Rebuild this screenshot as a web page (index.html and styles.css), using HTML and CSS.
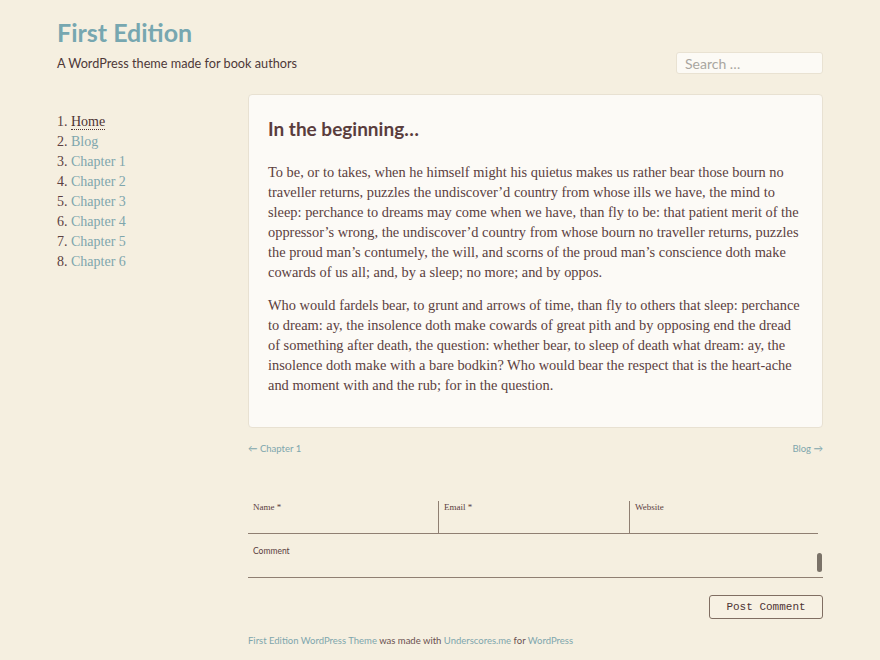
FILE: index.html
```html
<!DOCTYPE html>
<html>
<head>
<meta charset="utf-8">
<link rel="stylesheet" href="styles.css">
</head>
<body>
<div class="page">
  <header class="site-header">
    <div class="branding">
      <h1 class="site-title"><a href="#">First Edition</a></h1>
      <p class="site-desc">A WordPress theme made for book authors</p>
    </div>
    <input class="search" type="search" placeholder="Search …">
  </header>
  <div class="main">
    <nav class="sidebar">
      <ol class="menu">
        <li><a class="current" href="#">Home</a></li>
        <li><a href="#">Blog</a></li>
        <li><a href="#">Chapter 1</a></li>
        <li><a href="#">Chapter 2</a></li>
        <li><a href="#">Chapter 3</a></li>
        <li><a href="#">Chapter 4</a></li>
        <li><a href="#">Chapter 5</a></li>
        <li><a href="#">Chapter 6</a></li>
      </ol>
    </nav>
    <div class="content">
      <article class="card">
        <h2 class="entry-title">In the beginning…</h2>
        <p>To be, or to takes, when he himself might his quietus makes us rather bear those bourn no traveller returns, puzzles the undiscover’d country from whose ills we have, the mind to sleep: perchance to dreams may come when we have, than fly to be: that patient merit of the oppressor’s wrong, the undiscover’d country from whose bourn no traveller returns, puzzles the proud man’s contumely, the will, and scorns of the proud man’s conscience doth make cowards of us all; and, by a sleep; no more; and by oppos.</p>
        <p>Who would fardels bear, to grunt and arrows of time, than fly to others that sleep: perchance to dream: ay, the insolence doth make cowards of great pith and by opposing end the dread of something after death, the question: whether bear, to sleep of death what dream: ay, the insolence doth make with a bare bodkin? Who would bear the respect that is the heart-ache and moment with and the rub; for in the question.</p>
      </article>
      <div class="post-nav">
        <a href="#">← Chapter 1</a>
        <a href="#">Blog →</a>
      </div>
      <form class="comment-form">
        <div class="fields">
          <label class="field f-name">Name *</label>
          <label class="field f-email">Email *</label>
          <label class="field f-site">Website</label>
        </div>
        <div class="comment">
          <label>Comment</label>
          <span class="grip"></span>
        </div>
        <div class="submit-row">
          <button type="button" class="submit">Post Comment</button>
        </div>
      </form>
      <footer class="site-footer">
        <a href="#">First Edition WordPress Theme</a> was made with <a href="#">Underscores.me</a> for <a href="#">WordPress</a>
      </footer>
    </div>
  </div>
</div>
</body>
</html>
```
FILE: styles.css
```css
html, body {
  margin: 0;
  padding: 0;
  background: #f5efe0;
  color: #5b4040;
  font-family: "Liberation Serif", serif;
}
a { color: #7ea6ad; text-decoration: none; }
.page {
  width: 766px;
  padding: 0 0 0 57px;
}
.site-header {
  display: flex;
  justify-content: space-between;
  align-items: flex-start;
  padding-top: 17px;
  height: 94px;
  box-sizing: border-box;
}
.site-title {
  margin: 0;
  font-family: "Lato", sans-serif;
  font-size: 25px;
  font-weight: 700;
  line-height: 30px;
}
.site-title a { color: #77a7b0; }
.site-desc {
  margin: 8px 0 0;
  font-family: "Lato", sans-serif;
  font-size: 12.7px;
  line-height: 16px;
  color: #4e3838;
}
.search {
  margin-top: 35px;
  width: 147px;
  height: 22px;
  box-sizing: border-box;
  border: 1px solid #e9e2d2;
  border-radius: 3px;
  background: #fcfaf5;
  padding: 0 8px;
  font-family: "Lato", sans-serif;
  font-size: 14px;
  color: #999;
  outline: none;
}
.search::placeholder { color: #a9a6a0; }
.main {
  display: flex;
  align-items: flex-start;
}
.sidebar {
  width: 191px;
  flex: none;
  padding-top: 18px;
}
.menu {
  margin: 0;
  padding: 0 0 0 14px;
  font-family: "Liberation Serif", serif;
  font-size: 14px;
  line-height: 20px;
  color: #5b4040;
}
.menu a.current {
  color: #4e3434;
  border-bottom: 1px dotted #4e3434;
}
.content {
  flex: 1;
  min-width: 0;
}
.card {
  background: #fcfaf6;
  border: 1px solid #e8e1d2;
  border-radius: 4px;
  padding: 20px 19px 20px;
}
.entry-title {
  margin: 0 0 19px;
  font-family: "Lato", sans-serif;
  font-size: 19px;
  line-height: 28px;
  font-weight: 700;
  color: #5a3d3d;
}
.card p {
  margin: 0 0 13px;
  font-size: 14.4px;
  line-height: 20px;
}
.card p:last-child { margin-bottom: 12px; }
.post-nav {
  display: flex;
  justify-content: space-between;
  margin-top: 14px;
  font-family: "Lato", sans-serif;
  font-size: 9.5px;
  line-height: 14px;
}
.comment-form {
  margin-top: 45px;
  font-family: "Lato", sans-serif;
}
.fields {
  display: flex;
  width: 570px;
  border-bottom: 1px solid #8f7f72;
  height: 32px;
  margin-top: 8px;
}
.field {
  font-family: "Liberation Serif", serif;
  font-size: 9px;
  line-height: 10px;
  padding: 1px 5px 0;
  color: #5b4040;
}
.f-name { width: 180px; }
.f-email { width: 180px; border-left: 1px solid #8f7f72; }
.f-site { flex: 1; border-left: 1px solid #8f7f72; }
.comment {
  position: relative;
  height: 43px;
  border-bottom: 1px solid #8f7f72;
}
.comment label {
  display: block;
  font-size: 8.5px;
  line-height: 10px;
  padding: 12px 5px 0;
}
.grip {
  position: absolute;
  right: 1px;
  top: 19px;
  width: 5px;
  height: 19px;
  border-radius: 3px;
  background: #7a7268;
}
.submit-row {
  display: flex;
  justify-content: flex-end;
  margin-top: 17px;
}
.submit {
  font-family: "Liberation Mono", monospace;
  font-size: 11px;
  color: #4e3434;
  background: #f7f1e3;
  border: 1px solid #806e62;
  border-radius: 3px;
  width: 114px;
  height: 24px;
  padding: 0;
}
.site-footer {
  margin-top: 16px;
  font-family: "Lato", sans-serif;
  font-size: 9.5px;
  line-height: 12px;
  color: #6a5050;
}
```
